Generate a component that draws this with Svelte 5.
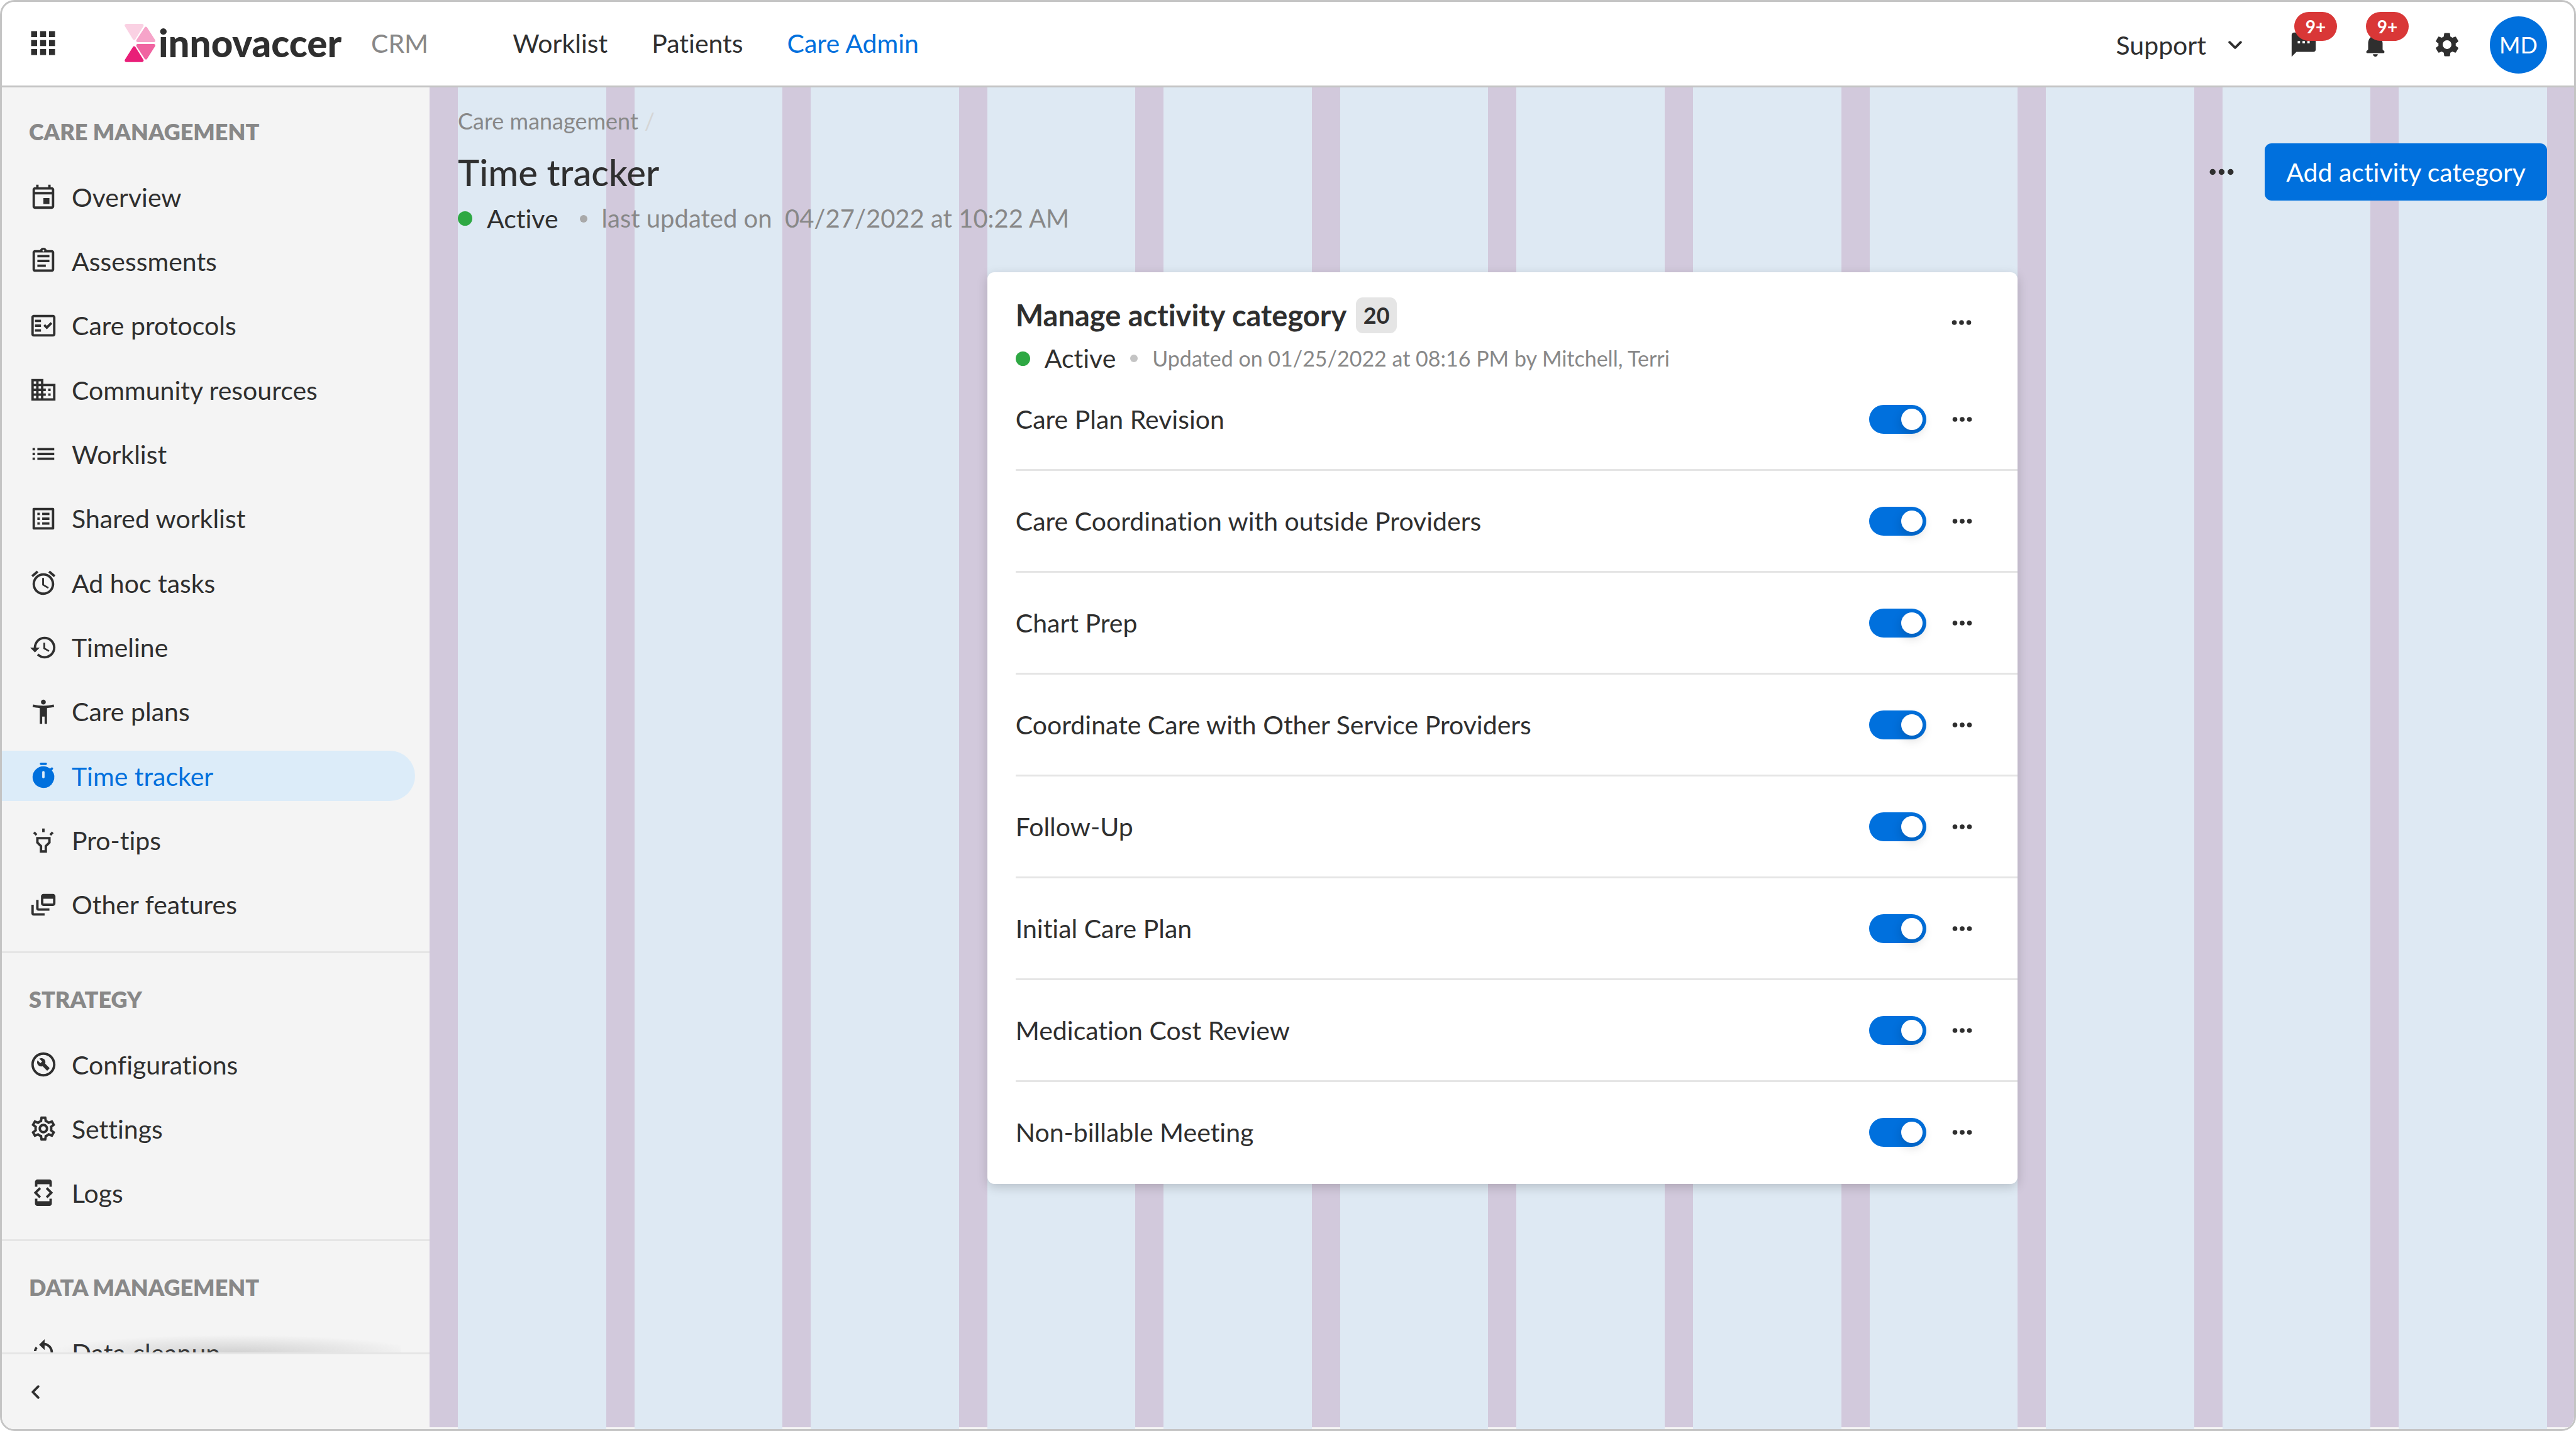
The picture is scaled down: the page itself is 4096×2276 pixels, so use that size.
<script>
  const icons = {
    apps: 'M4 8h4V4H4v4zm6 12h4v-4h-4v4zm-6 0h4v-4H4v4zm0-6h4v-4H4v4zm6 0h4v-4h-4v4zm6-10v4h4V4h-4zm-6 4h4V4h-4v4zm6 6h4v-4h-4v4zm0 6h4v-4h-4v4z',
    event: 'M19 4h-1V2h-2v2H8V2H6v2H5c-1.11 0-1.99.9-1.99 2L3 20a2 2 0 002 2h14c1.1 0 2-.9 2-2V6c0-1.1-.9-2-2-2zm0 16H5V10h14v10zm0-12H5V6h14v2zm-7 5h5v5h-5z',
    assignment: 'M7 15h7v2H7zm0-4h10v2H7zm0-4h10v2H7zm12-4h-4.18C14.4 1.84 13.3 1 12 1c-1.3 0-2.4.84-2.82 2H5c-.14 0-.27.01-.4.04-.39.08-.74.28-1.01.55-.18.18-.33.4-.43.64-.1.23-.16.49-.16.77v14c0 .27.06.54.16.78s.25.45.43.64c.27.27.62.47 1.01.55.13.02.26.03.4.03h14c1.1 0 2-.9 2-2V5c0-1.1-.9-2-2-2zm-7-.25c.41 0 .75.34.75.75s-.34.75-.75.75-.75-.34-.75-.75.34-.75.75-.75zM19 19H5V5h14v14z',
    factCheck: 'M20 3H4c-1.1 0-2 .9-2 2v14c0 1.1.9 2 2 2h16c1.1 0 2-.9 2-2V5c0-1.1-.9-2-2-2zm0 16H4V5h16v14zM19.41 10.42L17.99 9l-3.17 3.17-1.41-1.42L12 12.16 14.82 15zM5 7h5v2H5zM5 11h5v2H5zM5 15h5v2H5z',
    domain: 'M12 7V3H2v18h20V7H12zM6 19H4v-2h2v2zm0-4H4v-2h2v2zm0-4H4V9h2v2zm0-4H4V5h2v2zm4 12H8v-2h2v2zm0-4H8v-2h2v2zm0-4H8V9h2v2zm0-4H8V5h2v2zm10 12h-8v-2h2v-2h-2v-2h2v-2h-2V9h8v10zm-2-8h-2v2h2v-2zm0 4h-2v2h2v-2z',
    list: 'M3 13h2v-2H3v2zm0 4h2v-2H3v2zm0-8h2V7H3v2zm4 4h14v-2H7v2zm0 4h14v-2H7v2zM7 7v2h14V7H7z',
    listAlt: 'M19 5v14H5V5h14m1.1-2H3.9c-.5 0-.9.4-.9.9v16.2c0 .4.4.9.9.9h16.2c.4 0 .9-.5.9-.9V3.9c0-.5-.5-.9-.9-.9zM11 7h6v2h-6V7zm0 4h6v2h-6v-2zm0 4h6v2h-6zM7 7h2v2H7zm0 4h2v2H7zm0 4h2v2H7z',
    alarm: 'M22 5.72l-4.6-3.86-1.29 1.53 4.6 3.86L22 5.72zM7.88 3.39L6.6 1.86 2 5.71l1.29 1.53 4.59-3.85zM12.5 8H11v6l4.75 2.85.75-1.23-4-2.37V8zM12 4c-4.97 0-9 4.03-9 9s4.02 9 9 9a9 9 0 000-18zm0 16c-3.87 0-7-3.13-7-7s3.13-7 7-7 7 3.13 7 7-3.13 7-7 7z',
    history: 'M13 3a9 9 0 00-9 9H1l3.89 3.89.07.14L9 12H6c0-3.87 3.13-7 7-7s7 3.13 7 7-3.13 7-7 7c-1.93 0-3.68-.79-4.94-2.06l-1.42 1.42A8.954 8.954 0 0013 21a9 9 0 000-18zm-1 5v5l4.28 2.54.72-1.21-3.5-2.08V8H12z',
    person: 'M20.5 6c-2.61.7-5.67 1-8.5 1s-5.89-.3-8.5-1L3 8c1.86.5 4 .83 6 1v13h2v-6h2v6h2V9c2-.17 4.14-.5 6-1l-.5-2zM12 6c1.1 0 2-.9 2-2s-.9-2-2-2-2 .9-2 2 .9 2 2 2z',
    timer: 'M14 1h-4c-.55 0-1 .45-1 1s.45 1 1 1h4c.55 0 1-.45 1-1s-.45-1-1-1zM19.03 7.39l.75-.75c.38-.38.39-1.01 0-1.4l-.01-.01c-.39-.39-1.01-.38-1.4 0l-.75.75A8.962 8.962 0 0012 4c-4.8 0-8.88 3.96-9 8.76A9 9 0 0012 22a8.994 8.994 0 007.03-14.61zM13 13c0 .55-.45 1-1 1s-1-.45-1-1V9c0-.55.45-1 1-1s1 .45 1 1v4z',
    highlight: 'M6 14l3 3v5h6v-5l3-3V9H6v5zm2-3h8v2.17l-3 3V20h-2v-3.83l-3-3V11zm3-9h2v3h-2zM3.5 5.88l1.41-1.41 2.12 2.12L5.62 8zm13.46.71l2.12-2.12 1.41 1.41L18.38 8z',
    feed: 'M8 8H6v7c0 1.1.9 2 2 2h9v-2H8V8zM20 3h-8c-1.1 0-2 .9-2 2v6c0 1.1.9 2 2 2h8c1.1 0 2-.9 2-2V5c0-1.1-.9-2-2-2zm0 8h-8V7h8v4zM4 12H2v7c0 1.1.9 2 2 2h9v-2H4v-7z',
    build: 'M12 2C6.48 2 2 6.48 2 12s4.48 10 10 10 10-4.48 10-10S17.52 2 12 2zm0 18c-4.41 0-8-3.59-8-8s3.59-8 8-8 8 3.59 8 8-3.59 8-8 8zM13.49 11.38c.43-1.22.17-2.64-.81-3.62-1.11-1.11-2.79-1.3-4.1-.59l2.35 2.35-1.41 1.41-2.35-2.35c-.71 1.32-.52 2.99.59 4.1.98.98 2.4 1.24 3.62.81l3.41 3.41c.2.2.51.2.71 0l1.4-1.4c.2-.2.2-.51 0-.71l-3.41-3.41z',
    settings: 'M19.43 12.98c.04-.32.07-.64.07-.98 0-.34-.03-.66-.07-.98l2.11-1.65c.19-.15.24-.42.12-.64l-2-3.46a.5.5 0 00-.61-.22l-2.49 1c-.52-.4-1.08-.73-1.69-.98l-.38-2.65A.488.488 0 0014 2h-4c-.25 0-.46.18-.49.42l-.38 2.65c-.61.25-1.17.59-1.69.98l-2.49-1a.566.566 0 00-.18-.03c-.17 0-.34.09-.43.25l-2 3.46c-.13.22-.07.49.12.64l2.11 1.65c-.04.32-.07.65-.07.98 0 .33.03.66.07.98l-2.11 1.65c-.19.15-.24.42-.12.64l2 3.46a.5.5 0 00.61.22l2.49-1c.52.4 1.08.73 1.69.98l.38 2.65c.03.24.24.42.49.42h4c.25 0 .46-.18.49-.42l.38-2.65c.61-.25 1.17-.59 1.69-.98l2.49 1c.06.02.12.03.18.03.17 0 .34-.09.43-.25l2-3.46c.12-.22.07-.49-.12-.64l-2.11-1.65zm-1.98-1.71c.04.31.05.52.05.73 0 .21-.02.43-.05.73l-.14 1.13.89.7 1.08.84-.7 1.21-1.27-.51-1.04-.42-.9.68c-.43.32-.84.56-1.25.73l-1.06.43-.16 1.13-.2 1.35h-1.4l-.19-1.35-.16-1.13-1.06-.43c-.43-.18-.83-.41-1.23-.71l-.91-.7-1.06.43-1.27.51-.7-1.21 1.08-.84.89-.7-.14-1.13c-.03-.31-.05-.54-.05-.74s.02-.43.05-.73l.14-1.13-.89-.7-1.08-.84.7-1.21 1.27.51 1.04.42.9-.68c.43-.32.84-.56 1.25-.73l1.06-.43.16-1.13.2-1.35h1.39l.19 1.35.16 1.13 1.06.43c.43.18.83.41 1.23.71l.91.7 1.06-.43 1.27-.51.7 1.21-1.07.85-.89.7.14 1.13zM12 8c-2.21 0-4 1.79-4 4s1.79 4 4 4 4-1.79 4-4-1.79-4-4-4zm0 6c-1.1 0-2-.9-2-2s.9-2 2-2 2 .9 2 2-.9 2-2 2z',
    gear: 'M19.14 12.94c.04-.3.06-.61.06-.94 0-.32-.02-.64-.07-.94l2.03-1.58a.49.49 0 00.12-.61l-1.92-3.32a.488.488 0 00-.59-.22l-2.39.96c-.5-.38-1.03-.7-1.62-.94l-.36-2.54a.484.484 0 00-.48-.41h-3.84c-.24 0-.43.17-.47.41l-.36 2.54c-.59.24-1.13.57-1.62.94l-2.39-.96c-.22-.08-.47 0-.59.22L2.74 8.87c-.12.21-.08.47.12.61l2.03 1.58c-.05.3-.09.63-.09.94s.02.64.07.94l-2.03 1.58a.49.49 0 00-.12.61l1.92 3.32c.12.22.37.29.59.22l2.39-.96c.5.38 1.03.7 1.62.94l.36 2.54c.05.24.24.41.48.41h3.84c.24 0 .44-.17.47-.41l.36-2.54c.59-.24 1.13-.56 1.62-.94l2.39.96c.22.08.47 0 .59-.22l1.92-3.32c.12-.22.07-.47-.12-.61l-2.01-1.58zM12 15.6c-1.98 0-3.6-1.62-3.6-3.6s1.62-3.6 3.6-3.6 3.6 1.62 3.6 3.6-1.62 3.6-3.6 3.6z',
    developer: 'M7 5h10v2h2V3c0-1.1-.9-1.99-2-1.99L7 1c-1.1 0-2 .9-2 2v4h2V5zm8.41 11.59L20 12l-4.59-4.59L14 8.83 17.17 12 14 15.17l1.41 1.42zM10 15.17L6.83 12 10 8.83 8.59 7.41 4 12l4.59 4.59L10 15.17zM17 19H7v-2H5v4c0 1.1.9 2 2 2h10c1.1 0 2-.9 2-2v-4h-2v2z',
    rotate: 'M7.11 8.53L5.7 7.11C4.8 8.27 4.24 9.61 4.07 11h2.02c.14-.87.49-1.72 1.02-2.47zM6.09 13H4.07c.17 1.39.72 2.73 1.62 3.89l1.41-1.42c-.52-.75-.87-1.59-1.01-2.47zm1.01 5.32c1.16.9 2.51 1.44 3.9 1.61V17.9c-.87-.15-1.71-.49-2.46-1.03L7.1 18.32zM13 4.07V1L8.45 5.55 13 10V6.09c2.84.48 5 2.94 5 5.91s-2.16 5.43-5 5.91v2.02c3.95-.49 7-3.85 7-7.93s-3.05-7.44-7-7.93z',
    sms: 'M20 2H4c-1.1 0-1.99.9-1.99 2L2 22l4-4h14c1.1 0 2-.9 2-2V4c0-1.1-.9-2-2-2zM9 11H7V9h2v2zm4 0h-2V9h2v2zm4 0h-2V9h2v2z',
    bell: 'M12 22c1.1 0 2-.9 2-2h-4c0 1.1.89 2 2 2zm6-6v-5c0-3.07-1.64-5.64-4.5-6.32V4c0-.83-.67-1.5-1.5-1.5s-1.5.67-1.5 1.5v.68C7.63 5.36 6 7.92 6 11v5l-1.29 1.29c-.63.63-.19 1.71.7 1.71h13.17c.89 0 1.34-1.08.71-1.71L18 16z',
    down: 'M8.12 9.29L12 13.17l3.88-3.88a.996.996 0 111.41 1.41l-4.59 4.59a.996.996 0 01-1.41 0L6.7 10.7a.996.996 0 010-1.41c.39-.38 1.03-.39 1.42 0z',
    left: 'M14.71 6.71a.996.996 0 00-1.41 0L8.71 11.3a.996.996 0 000 1.41l4.59 4.59a.996.996 0 101.41-1.41L10.83 12l3.88-3.88c.39-.39.38-1.03 0-1.41z',
    more: 'M6 10a2 2 0 100 4 2 2 0 000-4zM12 10a2 2 0 100 4 2 2 0 000-4zM18 10a2 2 0 100 4 2 2 0 000-4z'
  };

  const sections = [
    {
      title: 'CARE MANAGEMENT',
      long: true,
      items: [
        ['event', 'Overview'],
        ['assignment', 'Assessments'],
        ['factCheck', 'Care protocols'],
        ['domain', 'Community resources'],
        ['list', 'Worklist'],
        ['listAlt', 'Shared worklist'],
        ['alarm', 'Ad hoc tasks'],
        ['history', 'Timeline'],
        ['person', 'Care plans'],
        ['timer', 'Time tracker'],
        ['highlight', 'Pro-tips'],
        ['feed', 'Other features']
      ]
    },
    {
      title: 'STRATEGY',
      items: [
        ['build', 'Configurations'],
        ['settings', 'Settings'],
        ['developer', 'Logs']
      ]
    },
    { title: 'DATA MANAGEMENT', items: [['rotate', 'Data cleanup']] }
  ];

  let current = $state('Time tracker');

  let categories = $state(
    [
      'Care Plan Revision',
      'Care Coordination with outside Providers',
      'Chart Prep',
      'Coordinate Care with Other Service Providers',
      'Follow-Up',
      'Initial Care Plan',
      'Medication Cost Review',
      'Non-billable Meeting'
    ].map((name) => ({ name, on: true }))
  );
</script>

{#snippet icon(name, big = false)}
  <svg class="icon" class:big viewBox="0 0 24 24" aria-hidden="true"><path fill-rule="evenodd" d={icons[name]} /></svg>
{/snippet}

<div class="app">
  <header class="topbar">
    <div class="brand">
      <button class="plain" aria-label="Apps">{@render icon('apps', true)}</button>
      <a class="logo" href="#home">
        <svg class="mark" viewBox="54 69 208 258" aria-hidden="true">
          <path class="t1" d="M65 79H173L119 167Z" />
          <path class="t2" d="M198 98L252 182H143Z" />
          <path class="t3" d="M143 214H252L198 299Z" />
          <path class="t4" d="M119 230L173 316H65Z" />
        </svg>
        <span class="wordmark">innovaccer</span>
      </a>
      <span class="product">CRM</span>
    </div>
    <nav class="tabs" aria-label="Main">
      <a href="#worklist">Worklist</a>
      <a href="#patients">Patients</a>
      <a href="#care-admin" class="on" aria-current="page">Care Admin</a>
    </nav>
    <div class="tools">
      <button class="plain support">Support {@render icon('down')}</button>
      <div class="alerts">
        <button class="plain" aria-label="Messages">{@render icon('sms')}<span class="count">9+</span></button>
        <button class="plain" aria-label="Notifications">{@render icon('bell')}<span class="count">9+</span></button>
        <button class="plain" aria-label="Settings">{@render icon('gear')}</button>
      </div>
      <button class="avatar">MD</button>
    </div>
  </header>

  <div class="body">
    <aside class="sidebar">
      <nav class="menu" aria-label="Care Admin">
        {#each sections as section}
          <section>
            <h2>{section.title}</h2>
            <ul class:long={section.long}>
              {#each section.items as [glyph, label]}
                <li>
                  <a
                    href="#{label}"
                    class="item"
                    class:on={label === current}
                    onclick={() => (current = label)}
                  >{@render icon(glyph)}{label}</a>
                </li>
              {/each}
            </ul>
          </section>
        {/each}
      </nav>
      <div class="collapse">
        <button class="plain" aria-label="Collapse menu">{@render icon('left')}</button>
      </div>
    </aside>

    <main>
      <div class="guides" aria-hidden="true">
        {#each Array(12) as _}<span></span>{/each}
      </div>
      <div class="page">
        <nav class="crumbs" aria-label="Breadcrumb">
          <a href="#care">Care management</a><span class="slash">/</span>
        </nav>
        <div class="heading">
          <h1>Time tracker</h1>
          <div class="actions">
            <button class="plain" aria-label="More actions">{@render icon('more', true)}</button>
            <button class="primary">Add activity category</button>
          </div>
        </div>
        <p class="status page-status">
          <span class="live"></span><span>Active</span><span class="sep"></span>
          <span class="muted">last updated on&nbsp; 04/27/2022 at 10:22 AM</span>
        </p>

        <div class="columns">
          <section class="card">
            <div class="card-head">
              <div>
                <h2 class="card-title">Manage activity category <span class="total">20</span></h2>
                <p class="status card-status">
                  <span class="live"></span><span>Active</span><span class="sep"></span>
                  <span class="muted small">Updated on 01/25/2022 at 08:16 PM by Mitchell, Terri</span>
                </p>
              </div>
              <button class="plain card-more" aria-label="Card actions">{@render icon('more')}</button>
            </div>
            <ul class="rows">
              {#each categories as category, i}
                <li>
                  <label for="category-{i}">{category.name}</label>
                  <input id="category-{i}" class="switch" type="checkbox" bind:checked={category.on} />
                  <button class="plain" aria-label="Actions for {category.name}">{@render icon('more')}</button>
                </li>
              {/each}
            </ul>
          </section>
        </div>
      </div>
    </main>
  </div>
</div>

<style>
  :global(body) {
    margin: 0;
    background: #fff;
  }

  .app {
    box-sizing: border-box;
    display: flex;
    flex-direction: column;
    height: 100vh;
    border: 3px solid #c4c4c4;
    border-radius: 23px;
    overflow: hidden;
    background: #fff;
    color: #2f2f2f;
    font-family: Lato, 'Noto Sans', sans-serif;
    font-size: 41px;
    line-height: 57px;
    font-variant-ligatures: none;
  }

  h1,
  h2,
  p,
  ul {
    margin: 0;
    padding: 0;
    list-style: none;
  }

  a {
    color: inherit;
    text-decoration: none;
  }

  button {
    font: inherit;
    color: inherit;
    cursor: pointer;
  }

  .plain {
    display: flex;
    align-items: center;
    padding: 0;
    border: 0;
    background: none;
  }

  .icon {
    display: block;
    flex: none;
    width: 46px;
    height: 46px;
    fill: currentColor;
  }

  .icon.big {
    width: 57px;
    height: 57px;
  }

  /* Top bar */
  .topbar {
    flex: none;
    display: flex;
    align-items: center;
    height: 133px;
    padding: 0 43px 0 37px;
    border-bottom: 3px solid #c4c4c4;
  }

  .brand {
    display: flex;
    align-items: center;
    padding-bottom: 3px;
  }

  .logo {
    display: flex;
    align-items: center;
    gap: 5px;
    margin-left: 101px;
  }

  .mark {
    width: 49px;
    height: 61px;
  }

  .mark path {
    stroke-width: 20;
    stroke-linejoin: round;
  }

  .t1 {
    fill: #fad1e3;
    stroke: #fad1e3;
  }

  .t2 {
    fill: #f6a4c9;
    stroke: #f6a4c9;
  }

  .t3 {
    fill: #f064a1;
    stroke: #f064a1;
  }

  .t4 {
    fill: #e91e78;
    stroke: #e91e78;
  }

  .wordmark {
    font-size: 60px;
    font-weight: 900;
  }

  .product {
    margin-left: 47px;
    color: #888;
  }

  .tabs {
    display: flex;
    gap: 70px;
    margin-left: 134px;
    padding-bottom: 3px;
  }

  .tabs .on {
    color: #0070dd;
  }

  .tools {
    display: flex;
    align-items: center;
    margin-left: auto;
    padding-top: 3px;
  }

  .support {
    gap: 23px;
  }

  .alerts {
    display: flex;
    gap: 68px;
    margin: 0 45px 0 63px;
  }

  .alerts button {
    position: relative;
  }

  .count {
    position: absolute;
    left: 8px;
    bottom: 29px;
    width: 68px;
    border-radius: 23px;
    background: #d93737;
    color: #fff;
    font-size: 28px;
    font-weight: 700;
    line-height: 46px;
    text-align: center;
  }

  .avatar {
    width: 91px;
    height: 91px;
    padding: 0;
    border: 0;
    border-radius: 50%;
    background: #0070dd;
    color: #fff;
    font-size: 36px;
  }

  /* Side menu */
  .body {
    flex: 1;
    display: flex;
    min-height: 0;
  }

  .sidebar {
    flex: none;
    display: flex;
    flex-direction: column;
    width: 680px;
    background: #f4f4f4;
  }

  .menu {
    flex: 1;
    min-height: 0;
    overflow: hidden;
  }

  .menu section {
    padding: 46px 0 34px;
  }

  .menu section + section {
    padding-top: 49px;
    border-top: 3px solid #e5e5e5;
  }

  .menu h2 {
    margin-bottom: 40px;
    padding-left: 43px;
    color: #888;
    font-size: 36px;
    font-weight: 800;
    line-height: 48px;
  }

  .menu ul {
    display: flex;
    flex-direction: column;
    justify-content: space-between;
    gap: 22px;
    padding-right: 23px;
  }

  .menu .long {
    min-height: 1206px;
  }

  .item {
    display: flex;
    align-items: center;
    gap: 22px;
    height: 80px;
    padding-left: 43px;
    border-radius: 0 40px 40px 0;
  }

  .item.on {
    background: #dcecf9;
    color: #0070dd;
  }

  .collapse {
    position: relative;
    flex: none;
    display: flex;
    align-items: center;
    height: 119px;
    padding-left: 31px;
    border-top: 3px solid #e5e5e5;
  }

  .collapse::before {
    content: '';
    position: absolute;
    left: 46px;
    right: 46px;
    bottom: 122px;
    height: 28px;
    background: radial-gradient(ellipse 50% 100% at 55% 100%, rgba(110, 110, 110, 0.26), rgba(110, 110, 110, 0));
  }

  /* Content */
  main {
    flex: 1;
    display: grid;
    min-width: 0;
    background: #f4f4f4;
  }

  .guides,
  .page {
    grid-area: 1 / 1;
    box-sizing: border-box;
    padding: 0 43px 0 45px;
  }

  .guides,
  .columns {
    display: grid;
    grid-template-columns: repeat(12, 1fr);
    column-gap: 45px;
  }

  .guides {
    background: linear-gradient(#d2c9dc, #d2c9dc) no-repeat;
    background-size: 100% calc(100% - 3px);
  }

  .guides span {
    background: #dee9f3;
  }

  .crumbs {
    display: flex;
    gap: 10px;
    padding-top: 30px;
    color: #888;
    font-size: 36px;
    line-height: 46px;
  }

  .slash {
    color: #d5d5d5;
  }

  .heading {
    display: flex;
    align-items: center;
    justify-content: space-between;
    margin-top: 13px;
  }

  h1 {
    font-size: 58px;
    font-weight: 500;
    line-height: 68px;
  }

  .actions {
    display: flex;
    align-items: center;
    gap: 40px;
  }

  .primary {
    height: 91px;
    padding: 0 34px;
    border: 0;
    border-radius: 11px;
    background: #0070dd;
    color: #fff;
  }

  .status {
    display: flex;
    align-items: center;
    gap: 23px;
  }

  .live,
  .sep {
    flex: none;
    width: 23px;
    height: 23px;
    border-radius: 50%;
    background: #2ea843;
  }

  .sep {
    width: 12px;
    height: 12px;
    background: #c4c4c4;
  }

  .page-status .sep {
    margin-left: 11px;
    background: #a9a9a9;
  }

  .page-status .muted {
    font-size: 40px;
  }

  .muted {
    color: #888;
  }

  .card {
    grid-column: 4 / span 6;
    margin-top: 57px;
    border-radius: 11px;
    background: #fff;
    box-shadow: 0 5px 17px rgba(0, 0, 0, 0.18);
  }

  .card-head {
    display: flex;
    justify-content: space-between;
    align-items: flex-start;
    padding: 40px 66px 0 45px;
  }

  .card-title {
    display: flex;
    align-items: center;
    gap: 15px;
    font-size: 47px;
    font-weight: 700;
    line-height: 57px;
  }

  .total {
    min-width: 65px;
    border-radius: 11px;
    background: #e5e5e5;
    font-size: 36px;
    text-align: center;
  }

  .card-status {
    margin-top: 23px;
    line-height: 34px;
  }

  .small {
    font-size: 34px;
  }

  .card-more {
    margin-top: 17px;
  }

  .rows {
    padding-left: 45px;
  }

  .rows li {
    display: flex;
    align-items: center;
    height: 159px;
    padding-right: 65px;
    border-bottom: 3px solid #e5e5e5;
  }

  .rows li:last-child {
    border-bottom-color: transparent;
  }

  .rows label {
    flex: 1;
  }

  .switch {
    appearance: none;
    display: flex;
    box-sizing: border-box;
    width: 91px;
    height: 46px;
    margin: 0 34px 0 0;
    padding: 6px;
    border-radius: 23px;
    background: #c4c4c4;
    cursor: pointer;
  }

  .switch::before {
    content: '';
    width: 34px;
    height: 34px;
    border-radius: 50%;
    background: #fff;
    box-shadow: 0 6px 17px rgba(0, 0, 0, 0.18);
  }

  .switch:checked {
    justify-content: flex-end;
    background: #0070dd;
  }
</style>
